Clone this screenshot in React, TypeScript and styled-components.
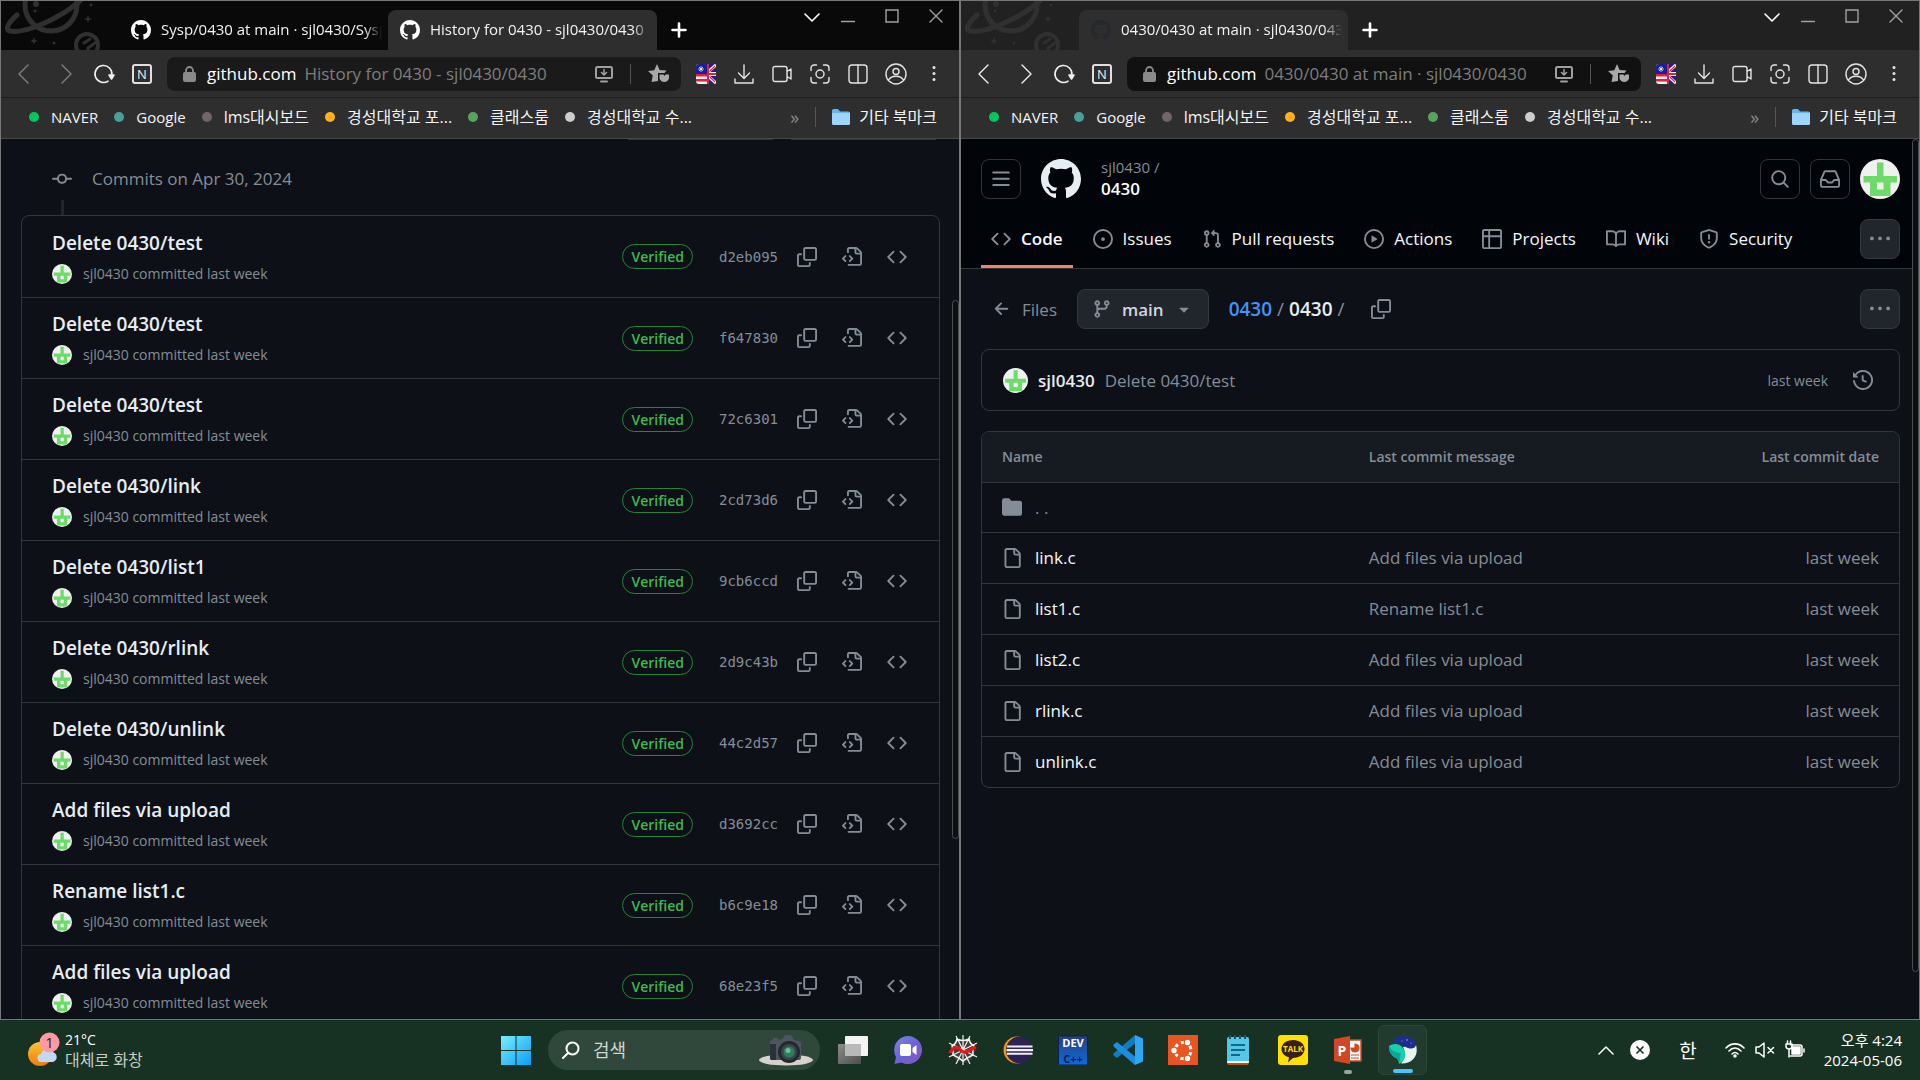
import React from "react";
import styled, { createGlobalStyle, css } from "styled-components";

const sans = `"Open Sans", "Noto Sans CJK KR", sans-serif`;
const mono = `"DejaVu Sans Mono", monospace`;

const c = {
  edge: "#777777",
  chrome: "#2e2e2e",
  canvas: "#0d1117",
  header: "#010409",
  border: "#30363d",
  muted: "#848d97",
  text: "#e6edf3",
  control: "#21262d",
  green: "#3fb950",
};

const GlobalStyle = createGlobalStyle`
  *, *::before, *::after { box-sizing: border-box; }
  body { margin: 0; background: #000; font-family: ${sans}; overflow: hidden; }
  button, input { font: inherit; color: inherit; background: none; border: 0; padding: 0; margin: 0; }
  button { cursor: pointer; display: inline-flex; align-items: center; justify-content: center; }
  a { color: inherit; text-decoration: none; }
  ul, h1, h2, h3, p { margin: 0; padding: 0; list-style: none; font-weight: inherit; font-size: inherit; }
  svg { display: block; flex: none; }
`;

/* ---------- icons ---------- */

const octicons = {
  code: "m11.28 3.22 4.25 4.25a.75.75 0 0 1 0 1.06l-4.25 4.25a.749.749 0 0 1-1.275-.326.749.749 0 0 1 .215-.734L13.94 8l-3.72-3.72a.749.749 0 0 1 .326-1.275.749.749 0 0 1 .734.215Zm-6.56 0a.751.751 0 0 1 1.042.018.751.751 0 0 1 .018 1.042L2.06 8l3.72 3.72a.749.749 0 0 1-.326 1.275.749.749 0 0 1-.734-.215L.47 8.53a.75.75 0 0 1 0-1.06Z",
  issue: "M8 9.5a1.5 1.5 0 1 0 0-3 1.5 1.5 0 0 0 0 3ZM8 0a8 8 0 1 1 0 16A8 8 0 0 1 8 0ZM1.5 8a6.5 6.5 0 1 0 13 0 6.5 6.5 0 0 0-13 0Z",
  pull: "M1.5 3.25a2.25 2.25 0 1 1 3 2.122v5.256a2.251 2.251 0 1 1-1.5 0V5.372A2.25 2.25 0 0 1 1.5 3.25Zm5.677-.177L9.573.677A.25.25 0 0 1 10 .854V2.5h1A2.5 2.5 0 0 1 13.5 5v5.628a2.251 2.251 0 1 1-1.5 0V5a1 1 0 0 0-1-1h-1v1.646a.25.25 0 0 1-.427.177L7.177 3.427a.25.25 0 0 1 0-.354ZM3.75 2.5a.75.75 0 1 0 0 1.5.75.75 0 0 0 0-1.5Zm0 9.5a.75.75 0 1 0 0 1.5.75.75 0 0 0 0-1.5Zm8.25.75a.75.75 0 1 0 1.5 0 .75.75 0 0 0-1.5 0Z",
  play: "M8 0a8 8 0 1 1 0 16A8 8 0 0 1 8 0ZM1.5 8a6.5 6.5 0 1 0 13 0 6.5 6.5 0 0 0-13 0Zm4.879-2.773 4.264 2.559a.25.25 0 0 1 0 .428l-4.264 2.559A.25.25 0 0 1 6 10.559V5.442a.25.25 0 0 1 .379-.215Z",
  table: "M0 1.75C0 .784.784 0 1.75 0h12.5C15.216 0 16 .784 16 1.75v12.5A1.75 1.75 0 0 1 14.25 16H1.75A1.75 1.75 0 0 1 0 14.25ZM6.5 6.5v8h7.75a.25.25 0 0 0 .25-.25V6.5Zm8-1.5V1.75a.25.25 0 0 0-.25-.25H6.5V5Zm-13 1.5v7.75c0 .138.112.25.25.25H5v-8ZM5 5V1.5H1.75a.25.25 0 0 0-.25.25V5Z",
  book: "M0 1.75A.75.75 0 0 1 .75 1h4.253c1.227 0 2.317.59 3 1.501A3.743 3.743 0 0 1 11.006 1h4.245a.75.75 0 0 1 .75.75v10.5a.75.75 0 0 1-.75.75h-4.507a2.25 2.25 0 0 0-1.591.659l-.622.621a.75.75 0 0 1-1.06 0l-.622-.621A2.25 2.25 0 0 0 5.258 13H.75a.75.75 0 0 1-.75-.75Zm7.251 10.324.004-5.073-.002-2.253A2.25 2.25 0 0 0 5.003 2.5H1.5v9h3.757a3.75 3.75 0 0 1 1.994.574ZM8.755 4.75l-.004 7.322a3.752 3.752 0 0 1 1.992-.572H14.5v-9h-3.495a2.25 2.25 0 0 0-2.25 2.25Z",
  shield: "M7.467.133a1.748 1.748 0 0 1 1.066 0l5.25 1.68A1.75 1.75 0 0 1 15 3.48V7c0 1.566-.32 3.182-1.303 4.682-.983 1.498-2.585 2.813-5.032 3.855a1.697 1.697 0 0 1-1.33 0c-2.447-1.042-4.049-2.357-5.032-3.855C1.32 10.182 1 8.566 1 7V3.48a1.755 1.755 0 0 1 1.217-1.667Zm.61 1.429a.25.25 0 0 0-.153 0l-5.25 1.68a.25.25 0 0 0-.174.238V7c0 1.358.275 2.666 1.057 3.86.784 1.194 2.121 2.34 4.366 3.297a.196.196 0 0 0 .154 0c2.245-.956 3.582-2.104 4.366-3.298C13.225 9.666 13.5 8.36 13.5 7V3.48a.251.251 0 0 0-.174-.237l-5.25-1.68ZM8.75 4.75v3a.75.75 0 0 1-1.5 0v-3a.75.75 0 0 1 1.5 0ZM9 10.5a1 1 0 1 1-2 0 1 1 0 0 1 2 0Z",
  kebab: "M8 9a1.5 1.5 0 1 0 0-3 1.5 1.5 0 0 0 0 3ZM1.5 9a1.5 1.5 0 1 0 0-3 1.5 1.5 0 0 0 0 3Zm13 0a1.5 1.5 0 1 0 0-3 1.5 1.5 0 0 0 0 3Z",
  bars: "M1 2.75A.75.75 0 0 1 1.75 2h12.5a.75.75 0 0 1 0 1.5H1.75A.75.75 0 0 1 1 2.75Zm0 5A.75.75 0 0 1 1.75 7h12.5a.75.75 0 0 1 0 1.5H1.75A.75.75 0 0 1 1 7.75ZM1.75 12h12.5a.75.75 0 0 1 0 1.5H1.75a.75.75 0 0 1 0-1.5Z",
  search: "M10.68 11.74a6 6 0 0 1-7.922-8.982 6 6 0 0 1 8.982 7.922l3.04 3.04a.749.749 0 0 1-.326 1.275.749.749 0 0 1-.734-.215ZM11.5 7a4.499 4.499 0 1 0-8.997 0A4.499 4.499 0 0 0 11.5 7Z",
  inbox: "M2.8 2.06A1.75 1.75 0 0 1 4.41 1h7.18c.7 0 1.333.417 1.61 1.06l2.74 6.395c.04.093.06.194.06.295v4.5A1.75 1.75 0 0 1 14.25 15H1.75A1.75 1.75 0 0 1 0 13.25v-4.5c0-.101.02-.202.06-.295Zm1.61.44a.25.25 0 0 0-.23.152L1.887 8H4.75a.75.75 0 0 1 .6.3L6.625 10h2.75l1.275-1.7a.75.75 0 0 1 .6-.3h2.863L11.82 2.652a.25.25 0 0 0-.23-.152Zm10.09 7h-2.875l-1.275 1.7a.75.75 0 0 1-.6.3h-3.5a.75.75 0 0 1-.6-.3L4.375 9.5H1.5v3.75c0 .138.112.25.25.25h12.5a.25.25 0 0 0 .25-.25Z",
  github: "M8 0c4.42 0 8 3.58 8 8a8.013 8.013 0 0 1-5.45 7.59c-.4.08-.55-.17-.55-.38 0-.27.01-1.13.01-2.2 0-.75-.25-1.23-.54-1.48 1.78-.2 3.65-.88 3.65-3.95 0-.88-.31-1.59-.82-2.15.08-.2.36-1.02-.08-2.12 0 0-.67-.22-2.2.82-.64-.18-1.32-.27-2-.27-.68 0-1.36.09-2 .27-1.53-1.03-2.2-.82-2.2-.82-.44 1.1-.16 1.92-.08 2.12-.51.56-.82 1.28-.82 2.15 0 3.06 1.86 3.75 3.64 3.95-.23.2-.44.55-.51 1.07-.46.21-1.61.55-2.33-.66-.15-.24-.6-.83-1.23-.82-.67.01-.27.38.01.53.34.19.73.9.82 1.13.16.45.68 1.31 2.69.94 0 .67.01 1.3.01 1.49 0 .21-.15.45-.55.38A7.995 7.995 0 0 1 0 8c0-4.42 3.58-8 8-8Z",
  copy: "M0 6.75C0 5.784.784 5 1.75 5h1.5a.75.75 0 0 1 0 1.5h-1.5a.25.25 0 0 0-.25.25v7.5c0 .138.112.25.25.25h7.5a.25.25 0 0 0 .25-.25v-1.5a.75.75 0 0 1 1.5 0v1.5A1.75 1.75 0 0 1 9.25 16h-7.5A1.75 1.75 0 0 1 0 14.25ZM5 1.75C5 .784 5.784 0 6.75 0h7.5C15.216 0 16 .784 16 1.75v7.5A1.75 1.75 0 0 1 14.25 11h-7.5A1.75 1.75 0 0 1 5 9.25Zm1.75-.25a.25.25 0 0 0-.25.25v7.5c0 .138.112.25.25.25h7.5a.25.25 0 0 0 .25-.25v-7.5a.25.25 0 0 0-.25-.25Z",
  fileCode: "M4 1.75C4 .784 4.784 0 5.75 0h5.586c.464 0 .909.184 1.237.513l2.914 2.914c.329.328.513.773.513 1.237v8.586A1.75 1.75 0 0 1 14.25 15h-9a.75.75 0 0 1 0-1.5h9a.25.25 0 0 0 .25-.25V6h-2.75A1.75 1.75 0 0 1 10 4.25V1.5H5.75a.25.25 0 0 0-.25.25v2.5a.75.75 0 0 1-1.5 0Zm1.72 4.97a.75.75 0 0 1 1.06 0l2 2a.75.75 0 0 1 0 1.06l-2 2a.749.749 0 0 1-1.275-.326.749.749 0 0 1 .215-.734l1.47-1.47-1.47-1.47a.75.75 0 0 1 0-1.06ZM3.28 7.78 1.81 9.25l1.47 1.47a.751.751 0 0 1-.018 1.042.751.751 0 0 1-1.042.018l-2-2a.75.75 0 0 1 0-1.06l2-2a.751.751 0 0 1 1.042.018.751.751 0 0 1 .018 1.042Zm8.22-6.218V4.25c0 .138.112.25.25.25h2.688l-.011-.013-2.914-2.914-.013-.011Z",
  file: "M2 1.75C2 .784 2.784 0 3.75 0h6.586c.464 0 .909.184 1.237.513l2.914 2.914c.329.328.513.773.513 1.237v9.586A1.75 1.75 0 0 1 13.25 16h-9.5A1.75 1.75 0 0 1 2 14.25Zm1.75-.25a.25.25 0 0 0-.25.25v12.5c0 .138.112.25.25.25h9.5a.25.25 0 0 0 .25-.25V6h-2.75A1.75 1.75 0 0 1 9 4.25V1.5Zm6.75.062V4.25c0 .138.112.25.25.25h2.688l-.011-.013-2.914-2.914-.013-.011Z",
  folder: "M1.75 1A1.75 1.75 0 0 0 0 2.75v10.5C0 14.216.784 15 1.75 15h12.5A1.75 1.75 0 0 0 16 13.25v-8.5A1.75 1.75 0 0 0 14.25 3H7.5a.25.25 0 0 1-.2-.1l-.9-1.2C6.07 1.26 5.55 1 5 1H1.75Z",
  history: "m.427 1.927 1.215 1.215a8.002 8.002 0 1 1-1.6 5.685.75.75 0 1 1 1.493-.154 6.5 6.5 0 1 0 1.18-4.458l1.358 1.358A.25.25 0 0 1 3.896 6H.25A.25.25 0 0 1 0 5.75V2.104a.25.25 0 0 1 .427-.177ZM7.75 4a.75.75 0 0 1 .75.75v2.992l2.028.812a.75.75 0 0 1-.557 1.392l-2.5-1A.751.751 0 0 1 7 8.25v-3.5A.75.75 0 0 1 7.75 4Z",
  branch: "M9.5 3.25a2.25 2.25 0 1 1 3 2.122V6A2.5 2.5 0 0 1 10 8.5H6a1 1 0 0 0-1 1v1.128a2.251 2.251 0 1 1-1.5 0V5.372a2.25 2.25 0 1 1 1.5 0v1.836A2.493 2.493 0 0 1 6 7h4a1 1 0 0 0 1-1v-.628A2.25 2.25 0 0 1 9.5 3.25Zm-6 0a.75.75 0 1 0 1.5 0 .75.75 0 0 0-1.5 0Zm8.25-.75a.75.75 0 1 0 0 1.5.75.75 0 0 0 0-1.5ZM4.25 12a.75.75 0 1 0 0 1.5.75.75 0 0 0 0-1.5Z",
  triangle: "m4.427 7.427 3.396 3.396a.25.25 0 0 0 .354 0l3.396-3.396A.25.25 0 0 0 11.396 7H4.604a.25.25 0 0 0-.177.427Z",
  arrowLeft: "M7.78 12.53a.75.75 0 0 1-1.06 0L2.47 8.28a.75.75 0 0 1 0-1.06l4.25-4.25a.751.751 0 0 1 1.042.018.751.751 0 0 1 .018 1.042L4.81 7h7.44a.75.75 0 0 1 0 1.5H4.81l2.97 2.97a.75.75 0 0 1 0 1.06Z",
  commit: "M11.93 8.5a4.002 4.002 0 0 1-7.86 0H.75a.75.75 0 0 1 0-1.5h3.32a4.002 4.002 0 0 1 7.86 0h3.32a.75.75 0 0 1 0 1.5Zm-1.43-.75a2.5 2.5 0 1 0-5 0 2.5 2.5 0 0 0 5 0Z",
};

type IconName = keyof typeof octicons;

const Icon = ({ name, size = 20 }: { name: IconName; size?: number }) => (
  <svg width={size} height={size} viewBox="0 0 16 16" fill="currentColor" aria-hidden="true">
    <path d={octicons[name]} />
  </svg>
);

const Stroke = ({ w = 20, h = 20, sw = 1.4, children }: { w?: number; h?: number; sw?: number; children: React.ReactNode }) => (
  <svg width={w} height={h} viewBox={`0 0 ${w} ${h}`} fill="none" stroke="currentColor" strokeWidth={sw} strokeLinecap="round" strokeLinejoin="round" aria-hidden="true">
    {children}
  </svg>
);

const Identicon = ({ size }: { size: number }) => (
  <svg width={size} height={size} viewBox="0 0 40 40" aria-hidden="true">
    <circle cx="20" cy="20" r="20" fill="#f0f0f0" />
    <path fill="#6cdb6a" fillRule="evenodd" d="M17 3.500h6.500v13.500H37v6.500H30.500V37H10V23.500H3.500V17H17ZM17 23.500V30.500h6.500V23.500Z" />
  </svg>
);

const Planets = () => (
  <svg width="118" height="49" viewBox="1 1 118 49" fill="none" stroke="#303030" aria-hidden="true">
    <circle cx="51" cy="5" r="26" strokeWidth="5" />
    <path strokeWidth="5" strokeLinecap="round" d="M17 15C9 22 4 30 10 31C26 34 60 18 80 1" />
    <circle cx="87" cy="45" r="11" strokeWidth="4" />
    <path strokeWidth="3" strokeLinecap="round" strokeLinejoin="round" d="M84 43l6-4M88 51v-3l7-5" />
    <g fill="#303030" stroke="none">
      <circle cx="36" cy="4" r="3" />
      <circle cx="35" cy="11" r="1.500" />
      <circle cx="91" cy="5" r="1.500" />
      <circle cx="54" cy="43" r="1.500" />
      <path d="M88 15l1 3 3 1-3 1-1 3-1-3-3-1 3-1ZM34 37l1 3 3 1-3 1-1 3-1-3-3-1 3-1Z" />
    </g>
  </svg>
);

/* ---------- browser frame ---------- */

const Desktop = styled.div`
  display: flex;
  flex-direction: column;
  height: 100vh;
`;

const Windows = styled.div`
  display: flex;
  flex: 1;
  min-height: 0;
`;

const Window = styled.section`
  flex: 1;
  min-width: 0;
  display: flex;
  flex-direction: column;
  border: 1px solid ${c.edge};
  background: ${c.canvas};
`;

const TabStrip = styled.header<{ $focused: boolean }>`
  display: flex;
  align-items: flex-end;
  height: 49px;
  flex: none;
  background: ${(p) => (p.$focused ? "#090909" : "#212121")};
`;

const Tab = styled.button<{ $active: boolean; $dim: boolean }>`
  && {
    justify-content: flex-start;
    gap: 10px;
    width: 269px;
    height: 40px;
    padding: 0 6px 0 12px;
    border-radius: 8px 8px 0 0;
    color: #f2f2f2;
    font-size: 15px;
    background: ${(p) => (p.$active ? c.chrome : "transparent")};
  }
  svg {
    color: ${(p) => (p.$dim ? "#24292f" : "#ffffff")};
  }
`;

const TabTitle = styled.span`
  flex: 1;
  min-width: 0;
  overflow: hidden;
  padding-bottom: 2px;
  white-space: nowrap;
  text-align: left;
  mask-image: linear-gradient(to right, #000 92%, transparent);
`;

const NewTab = styled.button`
  && {
    width: 44px;
    height: 40px;
    color: #ffffff;
  }
`;

const WindowButtons = styled.div`
  display: flex;
  align-self: flex-start;
  align-items: center;
  gap: 16px;
  margin-left: auto;
  padding: 8px 13px 0 0;
`;

const WindowButton = styled.button<{ $bright?: boolean }>`
  && {
    width: 20px;
    height: 14px;
    color: ${(p) => (p.$bright ? "#ffffff" : "#a0a0a0")};
  }
  & + & + & {
    margin-left: 8px;
  }
`;

const Toolbar = styled.div`
  display: flex;
  align-items: center;
  height: 47px;
  flex: none;
  padding: 0 14px 0 12px;
  background: ${c.chrome};
`;

const NavButtons = styled.div<{ $dim: boolean }>`
  display: flex;
  align-items: center;
  gap: 16px;
  margin-right: 14px;
  color: #f0f0f0;
  button:nth-child(-n + 2) {
    color: ${(p) => (p.$dim ? "#808080" : "#f0f0f0")};
  }
  button:first-child {
    margin-right: 4px;
  }
`;

const ToolButton = styled.button`
  width: 22px;
  height: 22px;
`;

const LetterBadge = styled.span`
  display: grid;
  place-items: center;
  width: 20px;
  height: 20px;
  border: 2px solid #e0e0e0;
  border-radius: 3px;
  font-size: 13px;
  line-height: 16px;
`;

const AddressBar = styled.div<{ $focused: boolean }>`
  display: flex;
  align-items: center;
  flex: 1;
  min-width: 0;
  height: 34px;
  padding: 0 11px 0 16px;
  border-radius: 8px;
  background: ${(p) => (p.$focused ? "#1a1a1a" : "#111111")};
  color: #a0a0a0;
  font-size: 17px;
`;

const Host = styled.label`
  margin: 0 8px 0 11px;
  padding-bottom: 1px;
  color: #ffffff;
`;

const PageTitle = styled.input`
  && {
    flex: 1;
    min-width: 0;
    padding-bottom: 1px;
    color: #7e7e7e;
    outline: none;
  }
`;

const Separator = styled.span<{ $m: number }>`
  width: 1px;
  height: 20px;
  margin: 0 ${(p) => p.$m}px;
  background: #555555;
`;

const Tools = styled.div`
  display: flex;
  align-items: center;
  gap: 16px;
  margin-left: 14px;
  color: #e4e4e4;
`;

const Bookmarks = styled.nav`
  display: flex;
  align-items: center;
  height: 42px;
  flex: none;
  padding: 0 22px 2px 28px;
  border-top: 1px solid #1f1f1f;
  border-bottom: 1px solid #484848;
  background: ${c.chrome};
  color: #f4f4f4;
  font-size: 15px;
  line-height: 24px;
  white-space: nowrap;
  :lang(ko) {
    font-size: 16px;
  }
`;

const BookmarkList = styled.ul`
  display: flex;
  gap: 16px;
  flex: 1;
`;

const Bookmark = styled.a`
  display: flex;
  align-items: center;
  gap: 12px;
`;

const Dot = styled.span<{ $color: string }>`
  width: 10px;
  height: 10px;
  border-radius: 50%;
  background: ${(p) => p.$color};
`;

const More = styled.button`
  && {
    color: #8a8a8a;
    font-size: 18px;
  }
`;

const FolderLink = styled.a`
  display: flex;
  align-items: center;
  gap: 9px;
`;

const Page = styled.main`
  position: relative;
  flex: 1;
  min-height: 0;
  overflow: hidden;
`;

const ScrollThumb = styled.span<{ $top: number; $share: number }>`
  position: absolute;
  right: 0;
  top: ${(p) => p.$top}%;
  width: 7px;
  height: ${(p) => p.$share}%;
  border: 1px solid #4c4f54;
  border-radius: 4px;
  background: #0b0d11;
`;

const bookmarks = [
  { name: "NAVER", color: "#03c75a", lang: "en" },
  { name: "Google", color: "#4a9e9c", lang: "en" },
  { name: "lms대시보드", color: "#746465", lang: "ko" },
  { name: "경성대학교 포...", color: "#ffb01f", lang: "ko" },
  { name: "클래스룸", color: "#57a55b", lang: "ko" },
  { name: "경성대학교 수...", color: "#cccccc", lang: "ko" },
];

type BrowserProps = {
  id: string;
  focused: boolean;
  tabs: { title: string; active: boolean }[];
  title: string;
  children: React.ReactNode;
};

const Browser = ({ id, focused, tabs, title, children }: BrowserProps) => (
  <Window>
    <TabStrip $focused={focused}>
      <Planets />
      {tabs.map((tab) => (
        <Tab key={tab.title} $active={tab.active} $dim={!focused}>
          <Icon name="github" />
          <TabTitle>{tab.title}</TabTitle>
        </Tab>
      ))}
      <NewTab aria-label="New tab">
        <Stroke w={18} h={18} sw={2.6}><path d="M9 2.500v13M2.500 9h13" /></Stroke>
      </NewTab>
      <WindowButtons>
        <WindowButton $bright aria-label="Tab list"><Stroke w={16} h={14} sw={1.6}><path d="M1 5l7 7 7-7" /></Stroke></WindowButton>
        <WindowButton aria-label="Minimize"><Stroke w={14} h={14}><path d="M0 12.500h14" /></Stroke></WindowButton>
        <WindowButton aria-label="Maximize"><Stroke w={14} h={14}><path strokeLinejoin="miter" d="M1 1h12v12H1Z" /></Stroke></WindowButton>
        <WindowButton aria-label="Close"><Stroke w={14} h={14}><path d="M1 1l12 12M13 1L1 13" /></Stroke></WindowButton>
      </WindowButtons>
    </TabStrip>
    <Toolbar>
      <NavButtons $dim={focused}>
        <ToolButton aria-label="Back"><Stroke><path d="M14 1L5 10l9 9" /></Stroke></ToolButton>
        <ToolButton aria-label="Forward"><Stroke><path d="M6 1l9 9-9 9" /></Stroke></ToolButton>
        <ToolButton aria-label="Reload">
          <Stroke w={22} h={22} sw={1.6}>
            <path d="M15 18.200A8.500 8.500 0 1 1 18.900 12" />
            <path fill="currentColor" d="M16 12h5l-2.500 4Z" />
          </Stroke>
        </ToolButton>
        <ToolButton aria-label="Naver"><LetterBadge>N</LetterBadge></ToolButton>
      </NavButtons>
      <AddressBar $focused={focused}>
        <svg width="13" height="16" viewBox="0 0 13 16" fill="#8a8a8a" aria-hidden="true">
          <rect y="6" width="13" height="10" rx="2" />
          <path d="M3 7V4.500a3.500 3.500 0 0 1 7 0V7" fill="none" stroke="#8a8a8a" strokeWidth="1.800" />
        </svg>
        <Host htmlFor={id}>github.com</Host>
        <PageTitle id={id} defaultValue={title} />
        <Stroke w={18} h={18} sw={2}>
          <rect x="1" y="2" width="16" height="11" rx="1.500" />
          <path d="M9 4.500v5M6.500 7.500L9 10l2.500-2.500" strokeWidth="1.500" />
          <path d="M6 16.500h6" />
        </Stroke>
        <Separator $m={17} />
        <svg width="22" height="20" viewBox="0 0 22 20" fill="#a8a8a8" aria-hidden="true">
          <path d="M9 0l2.600 6 6.900.6-2 2.400H10v8L3.500 18l1.300-6.500L0 7l6.300-.8Z" />
          <path d="M11.500 10.500h4l1 1.500 1-1.500h3.500v4a5 5 0 0 1-9.500 0Z" />
        </svg>
      </AddressBar>
      <Tools>
        <ToolButton aria-label="Translate">
          <svg width="20" height="20" viewBox="0 0 20 20" aria-hidden="true">
            <rect width="20" height="20" rx="3" fill="#f4f4f4" />
            <path d="M3 0h8v10H0V3a3 3 0 0 1 3-3Z" fill="#1b1f8f" />
            <path d="M0 10h11v2.500H0ZM0 15h11v2.500H0Z" fill="#e0203f" />
            <path d="M13 0h4a3 3 0 0 1 3 3v14a3 3 0 0 1-3 3h-4Z" fill="#1b1f8f" />
            <path d="M13 7l7-6M13 13l7 6" stroke="#f4f4f4" strokeWidth="3" />
            <path d="M13 8h7v4h-7Z" fill="#f4f4f4" />
            <path d="M11 0h2v9h7v2h-7v9h-2Z" fill="#e0203f" />
            <path d="M14 7l5-5M14 13l5 5" stroke="#e0203f" strokeWidth="1.200" />
            <path d="M3 3l4 4M7 3L3 7M5 2v6M2 5h6" stroke="#fff" strokeWidth=".7" />
          </svg>
        </ToolButton>
        <ToolButton aria-label="Downloads"><Stroke><path d="M10 1v13M4.500 9L10 14.500 15.500 9M1 15v4h18v-4" /></Stroke></ToolButton>
        <ToolButton aria-label="Record"><Stroke><path d="M3 2.500h10a2 2 0 0 1 2 2v11a2 2 0 0 1-2 2H3a2 2 0 0 1-2-2v-11a2 2 0 0 1 2-2ZM15 7.500l4-2.500v10l-4-2.500" /></Stroke></ToolButton>
        <ToolButton aria-label="Capture"><Stroke><path d="M6.500 1H4a3 3 0 0 0-3 3v2.500M13.500 1H16a3 3 0 0 1 3 3v2.500M1 13.500V16a3 3 0 0 0 3 3h2.500M19 13.500V16a3 3 0 0 1-3 3h-2.500" /><circle cx="10" cy="10" r="4" /></Stroke></ToolButton>
        <ToolButton aria-label="Split view"><Stroke><rect x="1" y="1" width="18" height="18" rx="3" /><path d="M10 1v18" /></Stroke></ToolButton>
        <ToolButton aria-label="Profile"><Stroke w={22} h={22}><circle cx="11" cy="11" r="10" /><circle cx="11" cy="8.500" r="3" /><path d="M3.500 17c3-5 12-5 15 0" /></Stroke></ToolButton>
        <ToolButton aria-label="Menu"><svg width="20" height="20" viewBox="0 0 20 20" fill="currentColor" aria-hidden="true"><circle cx="10" cy="3.500" r="1.500" /><circle cx="10" cy="9.500" r="1.500" /><circle cx="10" cy="15.500" r="1.500" /></svg></ToolButton>
      </Tools>
    </Toolbar>
    <Bookmarks>
      <BookmarkList>
        {bookmarks.map((b) => (
          <li key={b.name}>
            <Bookmark href="#" lang={b.lang}><Dot $color={b.color} />{b.name}</Bookmark>
          </li>
        ))}
      </BookmarkList>
      <More aria-label="More bookmarks">»</More>
      <Separator $m={16} />
      <FolderLink href="#" lang="ko">
        <svg width="18" height="16" viewBox="0 0 18 16" aria-hidden="true">
          <path d="M0 1.500Q0 0 1.500 0H6l2 2.500h8.500Q18 2.500 18 4v3H0Z" fill="#64b5ee" />
          <path d="M0 4h18v10.500q0 1.500-1.500 1.500h-15Q0 16 0 14.500Z" fill="#9fd4fb" />
        </svg>
        기타 북마크
      </FolderLink>
    </Bookmarks>
    <Page>{children}</Page>
  </Window>
);

/* ---------- commit history page ---------- */

const HistoryPage = styled.div`
  padding: 0 19px 0 20px;
`;

const FilterRow = styled.div`
  display: flex;
  justify-content: flex-end;
  gap: 18px;
  height: 1px;
  padding-right: 4px;
`;

const FilterEdge = styled.span`
  width: 145px;
  background: ${c.border};
`;

const DayHeading = styled.h2`
  display: flex;
  align-items: center;
  gap: 20px;
  height: 60px;
  padding: 18px 0 0 31px;
  color: ${c.muted};
  font-size: 17px;
  line-height: 40px;
`;

const TimelineStem = styled.div`
  width: 3px;
  height: 15px;
  margin-left: 40px;
  background: ${c.control};
`;

const CommitList = styled.ul`
  border: 1px solid ${c.border};
  border-radius: 8px;
`;

const CommitRow = styled.li`
  display: flex;
  align-items: center;
  height: 81px;
  padding: 0 32px 0 30px;
  color: ${c.muted};
  & + & {
    border-top: 1px solid ${c.border};
  }
`;

const CommitText = styled.div`
  flex: 1;
  min-width: 0;
`;

const CommitTitle = styled.a`
  display: block;
  margin-bottom: 8px;
  color: ${c.text};
  font-size: 19px;
  font-weight: 600;
  line-height: 26px;
`;

const CommitMeta = styled.p`
  display: flex;
  align-items: center;
  gap: 11px;
  font-size: 14px;
  line-height: 20px;
`;

const Verified = styled.button`
  && {
    height: 25px;
    padding: 0 8px;
    border: 1px solid #238636;
    border-radius: 13px;
    color: ${c.green};
    font-size: 14px;
    font-weight: 600;
  }
`;

const Hash = styled.a`
  margin: 0 19px 0 26px;
  font-family: ${mono};
  font-size: 14px;
`;

const RowActions = styled.div`
  display: flex;
  gap: 25px;
`;

const commits = [
  ["Delete 0430/test", "d2eb095"],
  ["Delete 0430/test", "f647830"],
  ["Delete 0430/test", "72c6301"],
  ["Delete 0430/link", "2cd73d6"],
  ["Delete 0430/list1", "9cb6ccd"],
  ["Delete 0430/rlink", "2d9c43b"],
  ["Delete 0430/unlink", "44c2d57"],
  ["Add files via upload", "d3692cc"],
  ["Rename list1.c", "b6c9e18"],
  ["Add files via upload", "68e23f5"],
];

const History = () => (
  <HistoryPage>
    <FilterRow><FilterEdge /><FilterEdge /></FilterRow>
    <DayHeading><Icon name="commit" />Commits on Apr 30, 2024</DayHeading>
    <TimelineStem />
    <CommitList>
      {commits.map(([title, hash]) => (
        <CommitRow key={hash}>
          <CommitText>
            <CommitTitle href="#">{title}</CommitTitle>
            <CommitMeta><Identicon size={20} />sjl0430 committed last week</CommitMeta>
          </CommitText>
          <Verified>Verified</Verified>
          <Hash href="#">{hash}</Hash>
          <RowActions>
            <button aria-label="Copy hash"><Icon name="copy" /></button>
            <button aria-label="View code at this point"><Icon name="fileCode" /></button>
            <button aria-label="Browse repository"><Icon name="code" /></button>
          </RowActions>
        </CommitRow>
      ))}
    </CommitList>
  </HistoryPage>
);

/* ---------- repository page ---------- */

const RepoHeader = styled.div`
  padding: 20px 19px 0 20px;
  border-bottom: 1px solid ${c.border};
  background: ${c.header};
`;

const RepoTop = styled.div`
  display: flex;
  align-items: center;
  height: 40px;
  color: ${c.text};
`;

const SquareButton = styled.button<{ $filled?: boolean }>`
  && {
    width: 40px;
    height: 40px;
    flex: none;
    border: 1px solid ${c.border};
    border-radius: 8px;
    color: ${c.muted};
    ${(p) =>
      p.$filled &&
      css`
        background: ${c.control};
        border-color: #32383f;
      `}
  }
`;

const HomeLink = styled.a`
  margin: 0 20px;
`;

const RepoName = styled.div`
  flex: 1;
  display: flex;
  flex-direction: column;
  color: ${c.muted};
  font-size: 15px;
  line-height: 20px;
  strong {
    color: #ffffff;
    font-size: 17px;
    font-weight: 600;
    line-height: 24px;
  }
`;

const HeaderTools = styled.div`
  display: flex;
  gap: 10px;
`;

const RepoNav = styled.nav`
  display: flex;
  align-items: center;
  gap: 10px;
  height: 69px;
  padding-top: 11px;
`;

const NavTab = styled.a<{ $current?: boolean }>`
  display: flex;
  align-items: center;
  gap: 10px;
  height: 58px;
  padding: 2px 10px 0;
  border-bottom: 3px solid ${(p) => (p.$current ? "#f78166" : "transparent")};
  color: #f4f8fc;
  font-size: 17px;
  font-weight: ${(p) => (p.$current ? 600 : 400)};
  svg {
    color: ${c.muted};
  }
`;

const Push = styled.span`
  flex: 1;
`;

const RepoBody = styled.div`
  padding: 20px 19px 20px 20px;
`;

const PathRow = styled.div`
  display: flex;
  align-items: center;
  margin-bottom: 20px;
  color: ${c.muted};
  font-size: 17px;
`;

const FilesLink = styled.a`
  display: flex;
  align-items: center;
  gap: 10px;
  margin: 0 20px 0 11px;
`;

const BranchButton = styled.button`
  && {
    gap: 10px;
    height: 40px;
    margin-right: 20px;
    padding: 0 14px;
    border: 1px solid #32383f;
    border-radius: 8px;
    background: ${c.control};
    color: ${c.muted};
    font-weight: 600;
  }
  span {
    color: #d0d7de;
  }
`;

const Breadcrumb = styled.h1`
  display: flex;
  gap: 5px;
  margin-right: 26px;
  font-size: 19px;
  a {
    color: #4493f8;
    font-weight: 600;
  }
  strong {
    color: ${c.text};
    font-weight: 600;
  }
`;

const LatestCommit = styled.div`
  display: flex;
  align-items: center;
  gap: 10px;
  height: 62px;
  margin-bottom: 20px;
  padding: 0 26px 0 21px;
  border: 1px solid ${c.border};
  border-radius: 8px;
  color: ${c.muted};
  font-size: 17px;
  strong {
    color: ${c.text};
    font-weight: 600;
  }
  time {
    margin-right: 15px;
    font-size: 14px;
  }
`;

const FilesFrame = styled.div`
  overflow: hidden;
  border: 1px solid ${c.border};
  border-radius: 8px;
`;

const FilesTable = styled.table`
  width: 100%;
  table-layout: fixed;
  border-collapse: collapse;
  color: ${c.muted};
  font-size: 17px;
  th,
  td {
    height: 51px;
    padding: 0 20px;
    text-align: left;
    font-weight: 400;
  }
  th:last-child,
  td:last-child {
    text-align: right;
  }
  thead th {
    height: 50px;
    background: #161b22;
    font-size: 14px;
    font-weight: 600;
  }
  tbody tr {
    border-top: 1px solid ${c.border};
  }
  tbody tr:first-child td {
    height: 50px;
  }
`;

const NameColumn = styled.col`
  width: 40%;
`;

const FileLink = styled.a<{ $parent?: boolean }>`
  display: flex;
  align-items: center;
  gap: 13px;
  color: ${(p) => (p.$parent ? c.muted : "#f4f8fc")};
  svg {
    color: ${c.muted};
  }
`;

const navItems: { icon: IconName; label: string }[] = [
  { icon: "code", label: "Code" },
  { icon: "issue", label: "Issues" },
  { icon: "pull", label: "Pull requests" },
  { icon: "play", label: "Actions" },
  { icon: "table", label: "Projects" },
  { icon: "book", label: "Wiki" },
  { icon: "shield", label: "Security" },
];

const files = [
  ["link.c", "Add files via upload"],
  ["list1.c", "Rename list1.c"],
  ["list2.c", "Add files via upload"],
  ["rlink.c", "Add files via upload"],
  ["unlink.c", "Add files via upload"],
];

const Repository = () => (
  <>
    <RepoHeader>
      <RepoTop>
        <SquareButton aria-label="Open menu"><Icon name="bars" /></SquareButton>
        <HomeLink href="#" aria-label="GitHub"><Icon name="github" size={40} /></HomeLink>
        <RepoName><span>sjl0430 /</span><strong>0430</strong></RepoName>
        <HeaderTools>
          <SquareButton aria-label="Search"><Icon name="search" /></SquareButton>
          <SquareButton aria-label="Notifications"><Icon name="inbox" /></SquareButton>
          <button aria-label="Account"><Identicon size={40} /></button>
        </HeaderTools>
      </RepoTop>
      <RepoNav>
        {navItems.map((item, i) => (
          <NavTab key={item.label} href="#" $current={i === 0}><Icon name={item.icon} />{item.label}</NavTab>
        ))}
        <Push />
        <SquareButton $filled aria-label="More tabs"><Icon name="kebab" /></SquareButton>
      </RepoNav>
    </RepoHeader>
    <RepoBody>
      <PathRow>
        <FilesLink href="#"><Icon name="arrowLeft" />Files</FilesLink>
        <BranchButton><Icon name="branch" /><span>main</span><Icon name="triangle" /></BranchButton>
        <Breadcrumb><a href="#">0430</a>/<strong>0430</strong>/</Breadcrumb>
        <button aria-label="Copy path"><Icon name="copy" /></button>
        <Push />
        <SquareButton $filled aria-label="More options"><Icon name="kebab" /></SquareButton>
      </PathRow>
      <LatestCommit>
        <Identicon size={25} />
        <strong>sjl0430</strong>
        <a href="#">Delete 0430/test</a>
        <Push />
        <time>last week</time>
        <button aria-label="History"><Icon name="history" /></button>
      </LatestCommit>
      <FilesFrame>
        <FilesTable>
          <colgroup><NameColumn /><col /><col /></colgroup>
          <thead>
            <tr><th>Name</th><th>Last commit message</th><th>Last commit date</th></tr>
          </thead>
          <tbody>
            <tr><td colSpan={3}><FileLink $parent href="#"><Icon name="folder" />. .</FileLink></td></tr>
            {files.map(([name, message]) => (
              <tr key={name}>
                <td><FileLink href="#"><Icon name="file" />{name}</FileLink></td>
                <td>{message}</td>
                <td>last week</td>
              </tr>
            ))}
          </tbody>
        </FilesTable>
      </FilesFrame>
    </RepoBody>
  </>
);

/* ---------- taskbar ---------- */

const Taskbar = styled.footer`
  display: grid;
  grid-template-columns: 1fr auto 1fr;
  align-items: center;
  height: 60px;
  flex: none;
  padding: 0 18px 0 26px;
  background: #173123;
  color: #ffffff;
`;

const Weather = styled.button`
  && {
    justify-self: start;
    gap: 5px;
    font-size: 14px;
    line-height: 20px;
    text-align: left;
  }
`;

const Stack = styled.span`
  display: flex;
  flex-direction: column;
`;

const Condition = styled.span`
  color: #c6cdc9;
  font-size: 16px;
`;

const Apps = styled.div`
  display: flex;
  align-items: center;
  margin-right: 10px;
`;

const AppButton = styled.button<{ $open?: boolean }>`
  && {
    position: relative;
    width: 55px;
    height: 50px;
  }
  ${(p) =>
    p.$open &&
    css`
      && {
        width: 49px;
        margin: 0 3px;
        border-radius: 6px;
        border: 1px solid #2c4638;
        background: #213c2e;
      }
    `}
`;

const Indicator = styled.span<{ $active?: boolean }>`
  position: absolute;
  bottom: 1px;
  left: 50%;
  width: ${(p) => (p.$active ? 20 : 8)}px;
  height: 4px;
  margin-left: ${(p) => (p.$active ? -10 : -4)}px;
  border-radius: 2px;
  background: ${(p) => (p.$active ? "#4cc2ff" : "#9aa59e")};
`;

const SearchBox = styled.label`
  display: flex;
  align-items: center;
  gap: 13px;
  width: 272px;
  height: 40px;
  margin: 0 5px;
  padding: 0 6px 0 14px;
  border-radius: 20px;
  background: #30483b;
  font-size: 18px;
  input {
    flex: 1;
    min-width: 0;
    outline: none;
  }
  input::placeholder {
    color: #cfd6d2;
    opacity: 1;
  }
`;

const Tray = styled.div`
  display: flex;
  align-items: center;
  justify-self: end;
`;

const TrayIcons = styled.div`
  display: flex;
  align-items: center;
  gap: 10px;
  margin: 0 19px 0 28px;
`;

const TrayButton = styled.button<{ $gap: number }>`
  && {
    margin-right: ${(p) => p.$gap}px;
    font-size: 19px;
  }
`;

const Clock = styled.time`
  display: flex;
  flex-direction: column;
  align-items: flex-end;
  font-size: 15px;
  line-height: 20px;
`;

const Art = ({ w = 30, h = 30, children }: { w?: number; h?: number; children: React.ReactNode }) => (
  <svg width={w} height={h} viewBox={`0 0 ${w} ${h}`} aria-hidden="true">{children}</svg>
);

const StartLogo = () => (
  <Art>
    <defs>
      <linearGradient id="start" x1="0" y1="0" x2="1" y2="1" gradientUnits="objectBoundingBox">
        <stop offset="0" stopColor="#79effd" /><stop offset="1" stopColor="#0a9df5" />
      </linearGradient>
    </defs>
    <path fill="url(#start)" d="M0 1h14.500v14H0ZM15.500 1H30v14H15.500ZM0 16h14.500v14H0ZM15.500 16H30v14H15.500Z" />
  </Art>
);

const WeatherArt = () => (
  <Art w={34} h={36}>
    <defs>
      <linearGradient id="sun" x1="0" y1="0" x2="0" y2="1"><stop offset="0" stopColor="#f8c52f" /><stop offset="1" stopColor="#f07a13" /></linearGradient>
    </defs>
    <circle cx="14" cy="22" r="12" fill="url(#sun)" />
    <path d="M16 30a4 4 0 0 1-1-8 5 5 0 0 1 9-2 4.500 4.500 0 0 1 3 10Z" fill="#c3d8f4" />
    <circle cx="23.500" cy="10.500" r="10" fill="#ff99a4" />
    <text x="23.500" y="15.500" textAnchor="middle" fontSize="14" fontFamily="Open Sans, sans-serif" fill="#1c1c1c">1</text>
  </Art>
);

const CameraArt = () => (
  <Art w={56} h={32}>
    <ellipse cx="28" cy="26" rx="27" ry="5.500" fill="#d8d2cd" />
    <path d="M12 7l3-1V4h5v2l5-1 2-4h6l3 5 5 1q2 0 2 2v15q0 2-2 2H14q-2 0-2-2Z" fill="#4c5560" />
    <path d="M12 10h6v16h-4q-2 0-2-2Z" fill="#2b3138" />
    <circle cx="31" cy="18" r="11" fill="#23282d" />
    <circle cx="31" cy="18" r="8" fill="#3c454c" />
    <circle cx="31" cy="18" r="5.500" fill="#2e7d5b" />
    <circle cx="30" cy="16.500" r="2.500" fill="#63c594" />
  </Art>
);

const TaskViewArt = () => (
  <Art>
    <defs>
      <linearGradient id="tv" x1="0" y1="0" x2="1" y2="1"><stop offset="0" stopColor="#8c8c8c" /><stop offset="1" stopColor="#4d4d4d" /></linearGradient>
    </defs>
    <rect x="7" y="1" width="23" height="20" rx="1" fill="#f3f3f3" />
    <rect x="0" y="9" width="23" height="20" rx="1" fill="url(#tv)" />
    <path d="M7 9h16v12H7Z" fill="#b9b9b9" />
  </Art>
);

const ChatArt = () => (
  <Art>
    <defs>
      <linearGradient id="chat" x1="0" y1="0" x2="1" y2="1"><stop offset="0" stopColor="#7f87e8" /><stop offset=".5" stopColor="#6a63d6" /><stop offset="1" stopColor="#8c55bd" /></linearGradient>
    </defs>
    <path d="M15 1a14 14 0 1 1-6.500 26.400L1.500 29l1.500-7A14 14 0 0 1 15 1Z" fill="url(#chat)" />
    <rect x="7" y="9" width="11" height="12" rx="2" fill="#fff" />
    <path d="M19.500 13l4-3v10l-4-3Z" fill="#fff" />
  </Art>
);

const SpiderArt = () => (
  <Art>
    <path d="M9 4l6 1 6-1 2 6 5 5-4 6-1 4-8 3-8-3-1-4-4-6 5-5Z" fill="#3f3f3f" />
    <g fill="none" stroke="#f0f0f0">
      <path strokeWidth="1.200" d="M15 0v30M1 8l28 14M29 8L1 22M8 1l14 28M22 1L8 29" />
      <path strokeWidth="1.600" d="M9 4q6 3 12 0 1 5 5 7-2 4-1 9-5 2-10 6-5-4-10-6 1-5-1-9 4-2 5-7Z" />
    </g>
    <path d="M2 18q4-8 9-4t7 3 10-5" fill="none" stroke="#e81313" strokeWidth="3.400" />
  </Art>
);

const EclipseArt = () => (
  <Art>
    <circle cx="14" cy="15" r="13.500" fill="#f7941e" />
    <circle cx="16.500" cy="15" r="13.500" fill="#2c2255" />
    <path d="M4 10.500h25.500v2H4ZM3.500 14h26.500v2.200H3.500ZM4 17.800h25.500v2H4Z" fill="#f2f0f8" />
  </Art>
);

const DevArt = () => (
  <Art>
    <defs>
      <linearGradient id="dev" x1="0" y1="0" x2="0" y2="1"><stop offset="0" stopColor="#2a3f7c" /><stop offset="1" stopColor="#0b6be0" /></linearGradient>
    </defs>
    <rect x=".5" y="1" width="29" height="29" fill="url(#dev)" stroke="#11204f" />
    <text x="15" y="12" textAnchor="middle" fontSize="11" fontWeight="700" fontFamily="Open Sans, sans-serif" fill="#fff">DEV</text>
    <text x="15" y="28" textAnchor="middle" fontSize="11" fontWeight="700" fontFamily="Open Sans, sans-serif" fill="#0b1b4a">C++</text>
  </Art>
);

const CodeArt = () => (
  <Art>
    <path d="M22 0v8.500L4 23 .5 20.500v-2Z" fill="#0f7cc4" />
    <path d="M22 30v-8.500L4 7 .5 9.500v2Z" fill="#1c8fdc" />
    <path d="M22 0l8 3.500v23L22 30Z" fill="#2ea8f5" />
  </Art>
);

const UbuntuArt = () => (
  <Art>
    <rect width="30" height="30" fill="#e95420" />
    <circle cx="15" cy="15.500" r="8" fill="none" stroke="#fff" strokeWidth="3" strokeDasharray="13.400 3.355" strokeDashoffset="-1.700" />
    <g fill="#fff" stroke="#e95420" strokeWidth="1.200"><circle cx="6" cy="15.500" r="3.300" /><circle cx="19.500" cy="7.500" r="3.300" /><circle cx="19.500" cy="23.500" r="3.300" /></g>
  </Art>
);

const NotepadArt = () => (
  <Art>
    <path d="M4 24h22v4q0 2-2 2H6q-2 0-2-2Z" fill="#b3570f" />
    <path d="M4 23h22v4q0 1-1 1H5q-1 0-1-1Z" fill="#f5f5f5" />
    <path d="M4 4q0-2 2-2h18q2 0 2 2v22H4Z" fill="#55c7e6" />
    <path d="M8 10h14M8 15h14M8 20h9" stroke="#12678a" strokeWidth="2" />
    <path d="M7 0v4M12 0v4M17 0v4M22 0v4" stroke="#0f5675" strokeWidth="2" />
  </Art>
);

const TalkArt = () => (
  <Art>
    <rect width="30" height="30" rx="3" fill="#fee102" />
    <path d="M15 5c6.500 0 11.500 3.800 11.500 9s-5 9-11.500 9l-5 4.500 1-5.200C6.500 21 3.500 18 3.500 14c0-5.200 5-9 11.500-9Z" fill="#3b1e1e" />
    <text x="15" y="17" textAnchor="middle" fontSize="8" fontWeight="700" fontFamily="Open Sans, sans-serif" fill="#fee102">TALK</text>
  </Art>
);

const PowerPointArt = () => (
  <Art>
    <rect x="14" y="5" width="14" height="21" fill="#fff" stroke="#d24726" strokeWidth="1.500" />
    <path d="M22 9a4 4 0 1 1-4 4h4ZM18 20h8M18 23h8" fill="#d24726" stroke="#d24726" strokeWidth="1.200" />
    <path d="M1 4l16-3v28L1 26Z" fill="#d24726" />
    <text x="9" y="20.500" textAnchor="middle" fontSize="14" fontWeight="700" fontFamily="Open Sans, sans-serif" fill="#fff">P</text>
  </Art>
);

const WhaleArt = () => (
  <Art>
    <path d="M28 10C31 20 25 29 13 28.500C17 24 18 17 15 12Z" fill="#e8f3f2" />
    <path d="M1 11C5 8 12 8 15 13C19 19 18 25 11 29C11 25 9 23 6 22C2 19 1 15 1 11Z" fill="#18cfae" />
    <path d="M1 11C4 16 8 18 13 18C12 22 12 25 11 29C11 25 9 23 6 22C2 19 1 15 1 11Z" fill="#0fa596" />
    <path d="M4 9C6 2 13 0 19 1.500C25 3 28 6 28 10C27 14 23 14 20 13C16 11 10 7 4 9Z" fill="#1c2f8f" />
    <g fill="#9fb3f0"><circle cx="19" cy="5" r=".8" /><circle cx="14" cy="6" r=".6" /><circle cx="23" cy="8" r=".6" /></g>
  </Art>
);

const apps: { name: string; art: React.ReactNode; running?: boolean }[] = [
  { name: "Task view", art: <TaskViewArt /> },
  { name: "Chat", art: <ChatArt /> },
  { name: "Spyder", art: <SpiderArt /> },
  { name: "Eclipse", art: <EclipseArt /> },
  { name: "Dev-C++", art: <DevArt /> },
  { name: "Visual Studio Code", art: <CodeArt /> },
  { name: "Ubuntu", art: <UbuntuArt /> },
  { name: "Notepad", art: <NotepadArt /> },
  { name: "KakaoTalk", art: <TalkArt /> },
  { name: "PowerPoint", art: <PowerPointArt />, running: true },
];

const SystemTaskbar = () => (
  <Taskbar>
    <Weather>
      <WeatherArt />
      <Stack><span>21°C</span><Condition>대체로 화창</Condition></Stack>
    </Weather>
    <Apps>
      <AppButton aria-label="Start"><StartLogo /></AppButton>
      <SearchBox>
        <Stroke w={18} h={18} sw={2}><circle cx="10.500" cy="7.500" r="6" /><path d="M6 12l-5 5" /></Stroke>
        <input placeholder="검색" aria-label="검색" />
        <CameraArt />
      </SearchBox>
      {apps.map((app) => (
        <AppButton key={app.name} aria-label={app.name}>{app.art}{app.running && <Indicator />}</AppButton>
      ))}
      <AppButton $open aria-label="Whale"><WhaleArt /><Indicator $active /></AppButton>
    </Apps>
    <Tray>
      <TrayButton $gap={16} aria-label="Hidden icons"><Stroke w={16} h={10} sw={1.5}><path d="M1 9l7-7 7 7" /></Stroke></TrayButton>
      <TrayButton $gap={29} aria-label="Status">
        <Art w={20} h={20}><circle cx="10" cy="10" r="10" fill="#fff" /><path d="M6.500 6.500l7 7M13.500 6.500l-7 7" stroke="#173123" strokeWidth="1.600" /></Art>
      </TrayButton>
      <TrayButton $gap={0} aria-label="Input language">한</TrayButton>
      <TrayIcons>
        <Stroke sw={1.6}><path d="M1 8c5-5.500 13-5.500 18 0M4 11c3.500-4 8.500-4 12 0M7 14c2-2 4-2 6 0" /><circle cx="10" cy="16" r="1" fill="currentColor" /></Stroke>
        <Stroke sw={1.5}><path d="M1 7v6h3l5 4V3L4 7ZM13 7.500l5.500 5.500M18.500 7.500L13 13" /></Stroke>
        <Stroke sw={1.5}><path d="M6 5h9a2 2 0 0 1 2 2v7a2 2 0 0 1-2 2H5.500M2.500 1v3M5.500 1v3M1 4h6v2a3 3 0 0 1-6 0ZM4 9v8M19 9v3" /><path d="M7 7h8v7H7Z" fill="currentColor" /></Stroke>
      </TrayIcons>
      <Clock dateTime="2024-05-06T16:24"><span>오후 4:24</span><span>2024-05-06</span></Clock>
    </Tray>
  </Taskbar>
);

export default function App() {
  return (
    <>
      <GlobalStyle />
      <Desktop>
        <Windows>
          <Browser
            id="address-history"
            focused
            title="History for 0430 - sjl0430/0430"
            tabs={[
              { title: "Sysp/0430 at main · sjl0430/Sysp", active: false },
              { title: "History for 0430 - sjl0430/0430", active: true },
            ]}
          >
            <History />
            <ScrollThumb $top={18.300} $share={61.300} />
          </Browser>
          <Browser
            id="address-repository"
            focused={false}
            title="0430/0430 at main · sjl0430/0430"
            tabs={[{ title: "0430/0430 at main · sjl0430/0430", active: true }]}
          >
            <Repository />
            <ScrollThumb $top={0} $share={94.700} />
          </Browser>
        </Windows>
        <SystemTaskbar />
      </Desktop>
    </>
  );
}
